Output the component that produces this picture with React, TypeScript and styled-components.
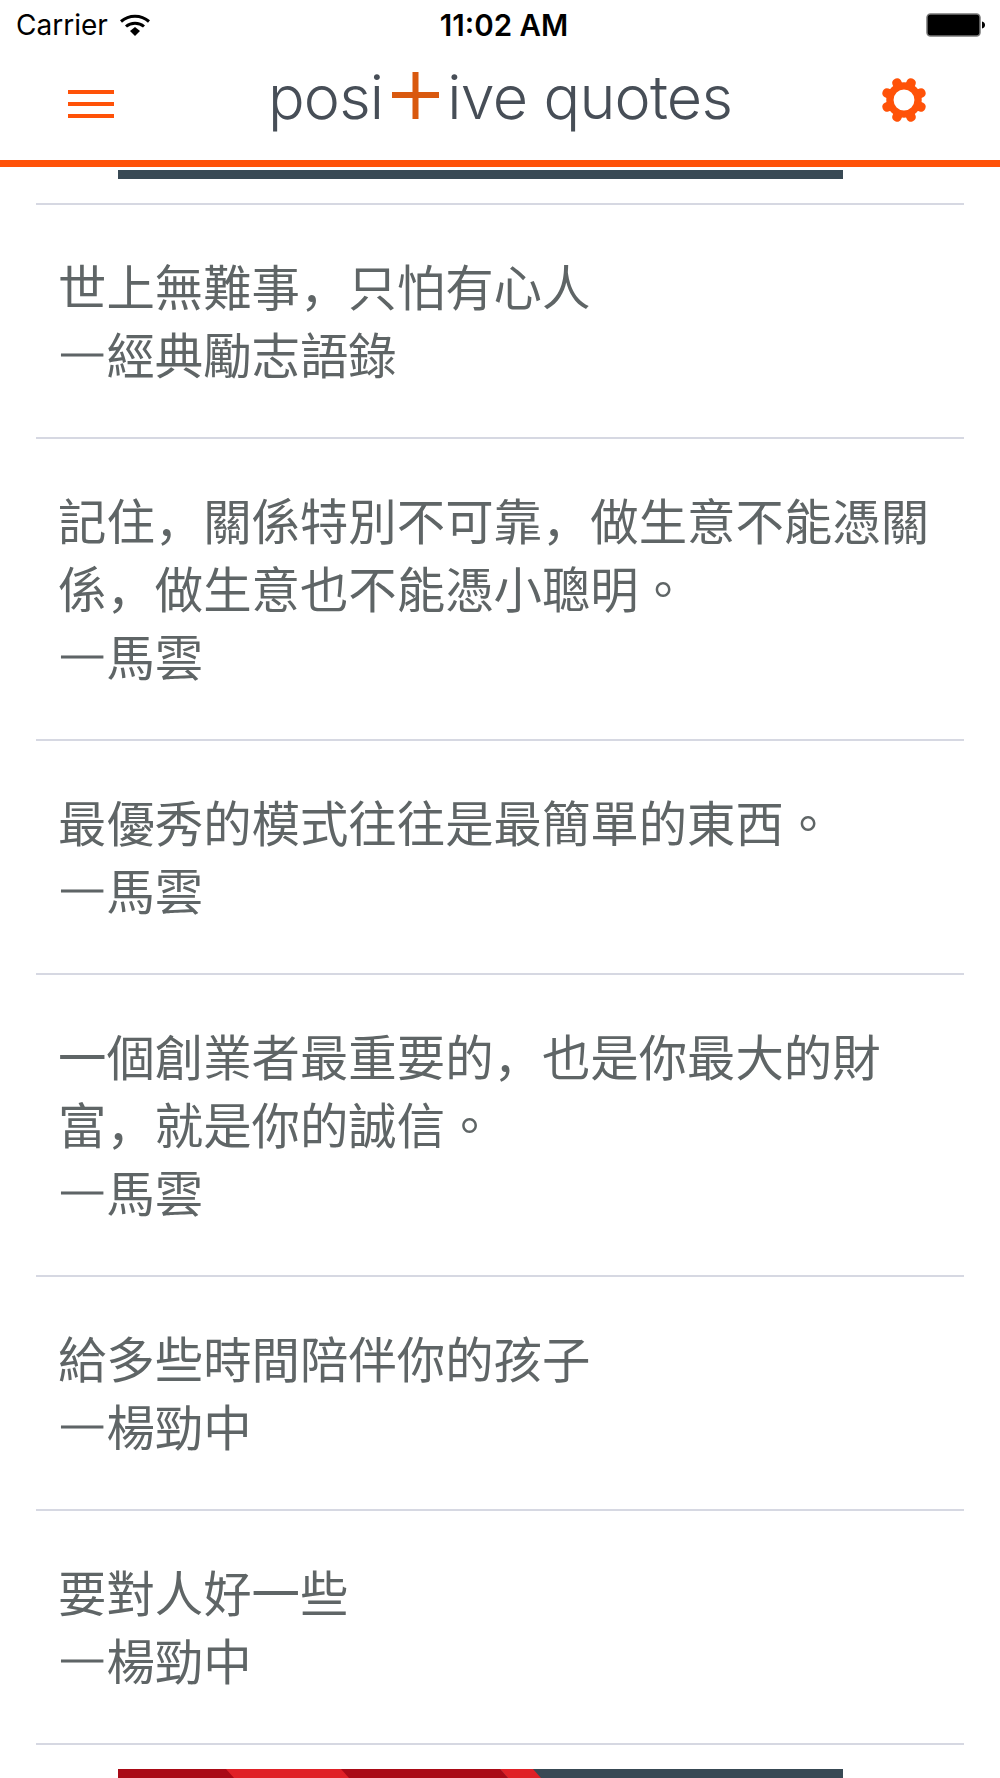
import React from 'react';
import styled, { createGlobalStyle } from 'styled-components';

const Global = createGlobalStyle`
  html, body { margin: 0; padding: 0; background: #fff; }
  body { width: 1000px; height: 1778px; overflow: hidden; }
`;

const Page = styled.div`
  width: 1000px;
  height: 1778px;
  display: flex;
  flex-direction: column;
  overflow: hidden;
  background: #fff;
`;

const StatusBar = styled.div`
  height: 53px;
  flex: none;
  display: grid;
  grid-template-columns: 1fr auto 1fr;
  align-items: center;
  padding: 0 14px 3px 16px;
  box-sizing: border-box;
  font-family: "Inter", "Liberation Sans", sans-serif;
  font-size: 28px;
  color: #000;
`;

const Carrier = styled.div`
  display: flex;
  align-items: center;
  gap: 12px;
`;

const Time = styled.div`
  font-weight: 600;
  font-size: 29.5px;
  margin-left: 6px;
`;

const Battery = styled.div`
  justify-self: end;
  display: flex;
`;

const NavBar = styled.div`
  flex: none;
  display: flex;
  align-items: center;
  justify-content: space-between;
  padding: 0 72px 6px 68px;
  box-sizing: border-box;
  border-bottom: 7px solid #ff5208;
  height: 114px;
`;

const Logo = styled.div`
  display: flex;
  align-items: center;
  font-family: "Inter", "Liberation Sans", sans-serif;
  font-weight: 300;
  font-size: 61px;
  line-height: 1;
  color: #474e57;
  letter-spacing: -0.8px;
  margin: -13px 0 0 6px;
`;

const LogoPlus = styled.svg`
  width: 47px;
  height: 47px;
  margin: 0 8px 4px 9px;
  flex: none;
`;

const GearIcon = styled.svg`
  margin-top: -8px;
`;

const AdBarTop = styled.div`
  flex: none;
  width: 725px;
  height: 9px;
  margin: 3px 0 0 118px;
  background: #384954;
`;

const List = styled.div`
  margin: 24px 36px 0;
  border-top: 2px solid #d6d8e2;
`;

const QuoteRow = styled.div`
  padding: 46px 22px 50px;
  border-bottom: 2px solid #d6d8e2;
  font-family: "Noto Sans CJK TC", "Noto Sans CJK SC", sans-serif;
  font-weight: 400;
  font-size: 48.4px;
  line-height: 68px;
  color: #5f6566;
  font-feature-settings: "fwid";
`;

const QuoteLine = styled.div`
  white-space: nowrap;
`;

const Dash = styled.span`
  -webkit-text-stroke: 1px #5f6566;
`;

const Banner = styled.svg`
  display: block;
  flex: none;
  width: 725px;
  height: 9px;
  margin: 24px 0 0 118px;
`;

const quotes: { lines: string[]; author: string }[] = [
  { lines: ['世上無難事,只怕有心人'], author: '經典勵志語錄' },
  { lines: ['記住,關係特別不可靠,做生意不能憑關', '係,做生意也不能憑小聰明。'], author: '馬雲' },
  { lines: ['最優秀的模式往往是最簡單的東西。'], author: '馬雲' },
  { lines: ['一個創業者最重要的,也是你最大的財', '富,就是你的誠信。'], author: '馬雲' },
  { lines: ['給多些時間陪伴你的孩子'], author: '楊勁中' },
  { lines: ['要對人好一些'], author: '楊勁中' },
];

const Gear = () => {
  const teeth = Array.from({ length: 8 }, (_, i) => 22.5 + i * 45);
  return (
    <GearIcon width="48" height="48" viewBox="0 0 46 46">
      {teeth.map((a) => (
        <rect key={a} x="18.500" y="1" width="9" height="10" rx="4" fill="#ff5208" transform={`rotate(${a} 23 23)`} />
      ))}
      <circle cx="23" cy="23" r="13.500" fill="none" stroke="#ff5208" strokeWidth="7" />
    </GearIcon>
  );
};

export default function App() {
  return (
    <Page>
      <Global />
      <StatusBar>
        <Carrier>
          Carrier
          <svg width="30" height="22" viewBox="0 0 30 22">
            <path d="M1 7.500C9 .5 21 .5 29 7.500" fill="none" stroke="#000" strokeWidth="3" />
            <path d="M6 12.500C11 8 19 8 24 12.500" fill="none" stroke="#000" strokeWidth="3" />
            <path d="M10 17l5-4 5 4-5 5z" fill="#000" />
          </svg>
        </Carrier>
        <Time>11:02 AM</Time>
        <Battery>
          <svg width="60" height="24" viewBox="0 0 60 24">
            <rect x="1" y="1" width="53" height="22" rx="3.500" fill="#000" stroke="#777" strokeWidth="1.500" />
            <path d="M56 8.500c2 .3 3 1.700 3 3.500s-1 3.200-3 3.500z" fill="#000" />
          </svg>
        </Battery>
      </StatusBar>
      <NavBar>
        <svg width="46" height="28" viewBox="0 0 46 28">
          <rect y="0" width="46" height="4" fill="#ff5208" />
          <rect y="12" width="46" height="4" fill="#ff5208" />
          <rect y="24" width="46" height="4" fill="#ff5208" />
        </svg>
        <Logo>
          posi
          <LogoPlus viewBox="0 0 47 47">
            <rect x="0" y="20" width="47" height="6" fill="#d9590f" />
            <rect x="20.500" y="0" width="6" height="47" fill="#d9590f" />
          </LogoPlus>
          ive quotes
        </Logo>
        <Gear />
      </NavBar>
      <AdBarTop />
      <List>
        {quotes.map((q) => (
          <QuoteRow key={q.lines[0]}>
            {q.lines.map((l) => (
              <QuoteLine key={l}>{l}</QuoteLine>
            ))}
            <QuoteLine>
              <Dash>—</Dash>
              {q.author}
            </QuoteLine>
          </QuoteRow>
        ))}
      </List>
      <Banner viewBox="0 0 725 9">
        <rect width="725" height="9" fill="#384954" />
        <polygon points="0,0 382,0 390,9 0,9" fill="#a90a16" />
        <polygon points="108,0 223,0 231,9 116,9" fill="#e02127" />
        <polygon points="382,0 415,0 423,9 390,9" fill="#e02127" />
      </Banner>
    </Page>
  );
}
